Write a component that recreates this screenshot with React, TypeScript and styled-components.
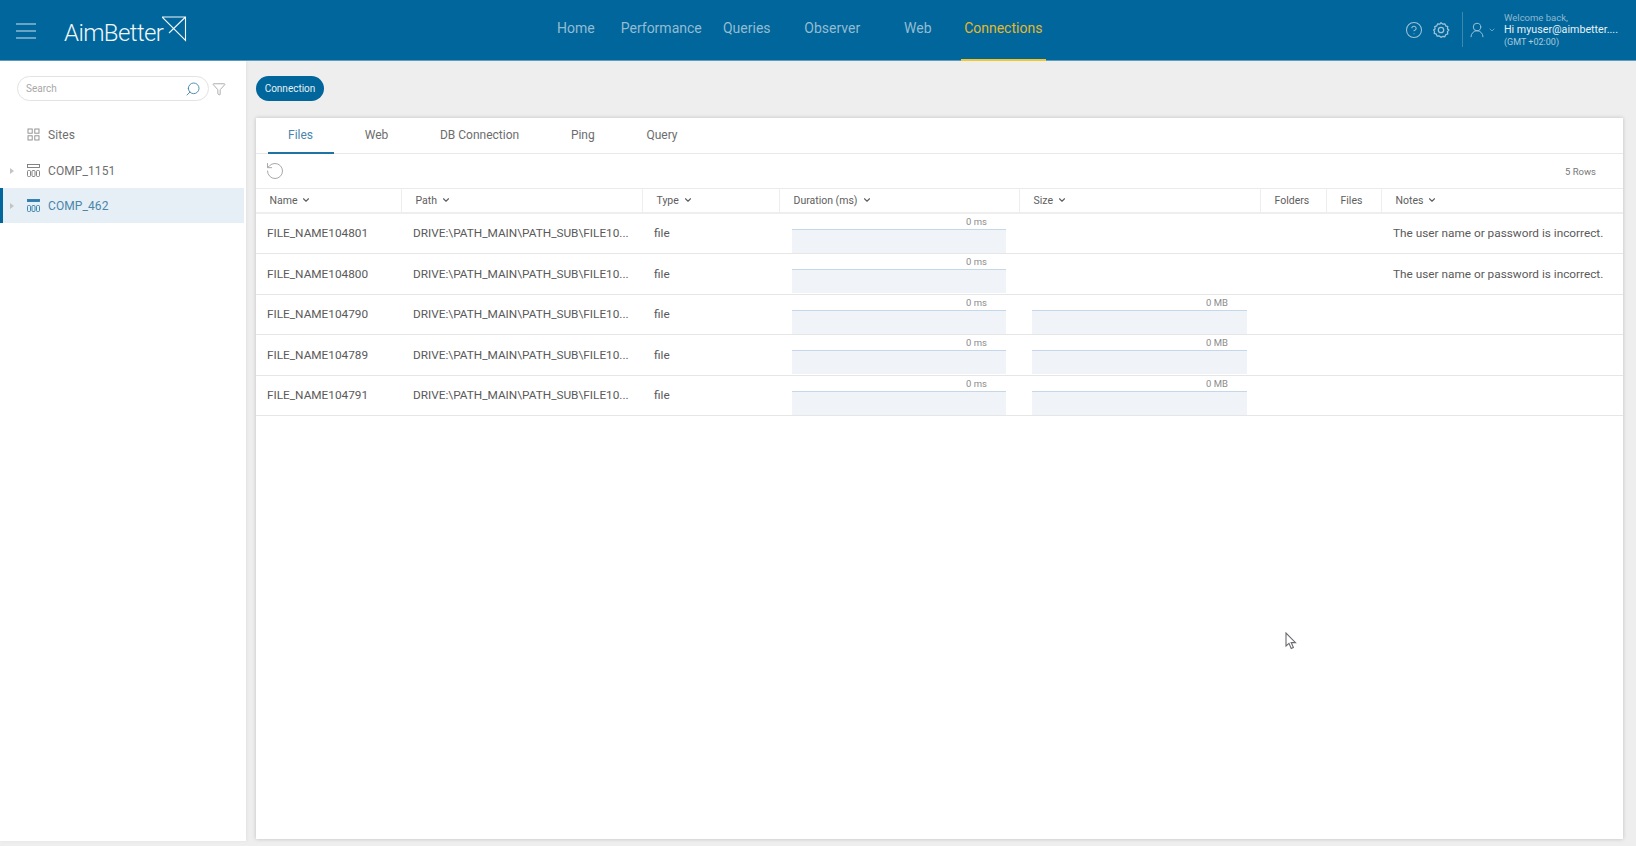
import React from 'react';
import styled, { createGlobalStyle } from 'styled-components';
import { ChevronDown, CircleHelp, Funnel, RotateCcw, Search, UserRound } from 'lucide-react';

const GlobalStyle = createGlobalStyle`
  html, body {
    margin: 0;
    height: 100%;
    overflow: hidden;
    background: #eeeeee;
    font-family: Roboto, "Liberation Sans", sans-serif;
  }
  * { box-sizing: border-box; }
`;

const COLUMNS = '146px 241px 137px 240px 241px 66px 55px 1fr';

const Page = styled.div`
  position: relative;
  width: 1636px;
  height: 846px;
  display: flex;
  flex-direction: column;
  overflow: hidden;
`;

const Header = styled.header`
  height: 61px;
  flex: none;
  display: flex;
  background: #00669b;
  border-bottom: 1px solid #5f9dbd;
`;

const Brand = styled.div`
  width: 533px;
  flex: none;
  display: flex;
  align-items: flex-start;
  padding: 16px 0 0 16px;
`;

const Burger = styled.svg`
  width: 20px;
  height: 17px;
  margin: 7px 28px 0 0;
  flex: none;
`;

const Wordmark = styled.span`
  font-size: 24px;
  font-weight: 300;
  line-height: 28px;
  margin: 3px -1px 0 0;
  letter-spacing: -0.6px;
  color: #f2f7fa;
`;

const Nav = styled.nav`
  display: flex;
  height: 61px;
`;

const NavItem = styled.a<{ $active?: boolean }>`
  width: 85.5px;
  display: flex;
  justify-content: center;
  padding-top: 19px;
  font-size: 14px;
  line-height: 18px;
  font-weight: 400;
  white-space: nowrap;
  color: ${p => (p.$active ? '#e3b92f' : '#93bcd3')};
  border-bottom: 2px solid ${p => (p.$active ? '#f3c62b' : 'transparent')};
`;

const UserBar = styled.div`
  margin-left: auto;
  display: flex;
  align-items: center;
  padding: 12px 0 13px 0;
  width: 231px;
  color: #9cc3d9;
`;

const HeaderIcons = styled.div`
  display: flex;
  align-items: center;
  gap: 9px;
  height: 100%;
  padding-right: 12px;
  border-right: 1px solid #3d88ae;
`;

const UserIcon = styled.div`
  display: flex;
  align-items: center;
  gap: 2px;
  padding: 0 8px 0 5px;
`;

const UserText = styled.div`
  display: flex;
  flex-direction: column;
  min-width: 0;
`;

const Welcome = styled.span`
  font-size: 9.5px;
  line-height: 12px;
  color: #8fb9d1;
`;

const Hi = styled.span`
  font-size: 10.7px;
  line-height: 12px;
  color: #e8f1f6;
  white-space: nowrap;
`;

const Zone = styled.span`
  font-size: 9px;
  line-height: 12px;
  color: #a9cadd;
`;

const Body = styled.div`
  flex: 1;
  display: flex;
  min-height: 0;
`;

const Sidebar = styled.aside`
  width: 246px;
  flex: none;
  height: 780px;
  background: #ffffff;
  padding-top: 15px;
  box-shadow: 1px 0 3px rgba(0, 0, 0, 0.05);
`;

const SearchRow = styled.div`
  display: flex;
  align-items: center;
  padding: 0 0 0 17px;
  margin-bottom: 17px;
`;

const SearchBox = styled.div`
  width: 192px;
  height: 25px;
  display: flex;
  align-items: center;
  justify-content: space-between;
  padding: 0 7px 0 8px;
  border: 1px solid #e3e3e3;
  border-radius: 13px;
  font-size: 10px;
  color: #a8a8a8;
`;

const FilterButton = styled.span`
  display: flex;
  margin-left: 3px;
  color: #8d8d8d;
`;

const TreeRow = styled.div<{ $active?: boolean }>`
  height: 35px;
  width: 244px;
  display: flex;
  align-items: center;
  font-size: 12px;
  letter-spacing: 0.1px;
  padding-left: ${p => (p.$active ? '7px' : '10px')};
  color: ${p => (p.$active ? '#4a86ab' : '#6f6f6f')};
  background: ${p => (p.$active ? '#e6eff5' : 'transparent')};
  border-left: ${p => (p.$active ? '3px solid #00669b' : 'none')};
`;

const RootRow = styled(TreeRow)`
  padding-bottom: 2px;
`;

const Caret = styled.span<{ $hidden?: boolean }>`
  width: 0;
  height: 0;
  flex: none;
  border-left: 4px solid #c4c4c4;
  border-top: 3px solid transparent;
  border-bottom: 3px solid transparent;
  margin-right: 13px;
  visibility: ${p => (p.$hidden ? 'hidden' : 'visible')};
`;

const TreeIcon = styled.svg`
  width: 13px;
  height: 13px;
  flex: none;
  margin-right: 8px;
`;

const Main = styled.main`
  flex: 1;
  min-width: 0;
  display: flex;
  flex-direction: column;
  padding: 15px 13px 7px 10px;
`;

const PrimaryButton = styled.button`
  align-self: flex-start;
  height: 25px;
  width: 68px;
  padding: 0;
  border: none;
  border-radius: 13px;
  background: #00669b;
  color: #e6f0f5;
  font-family: inherit;
  font-size: 10px;
  margin-bottom: 17px;
`;

const Card = styled.section`
  flex: 1;
  min-height: 0;
  background: #ffffff;
  box-shadow: 0 0 4px rgba(0, 0, 0, 0.2);
`;

const Tabs = styled.div`
  height: 36px;
  display: flex;
  gap: 10.7px;
  padding-left: 11.5px;
  border-bottom: 1px solid #e9e9e9;
`;

const Tab = styled.a<{ $active?: boolean }>`
  padding: 10px 20.5px 0;
  font-size: 12px;
  line-height: 15px;
  white-space: nowrap;
  color: ${p => (p.$active ? '#4a86ab' : '#6d6d6d')};
  border-bottom: 2px solid ${p => (p.$active ? '#1d74a3' : 'transparent')};
  height: 36px;
`;

const Toolbar = styled.div`
  height: 34px;
  display: flex;
  align-items: center;
  justify-content: space-between;
  padding: 0 27px 0 9px;
  color: #a9a9a9;
`;

const RowCount = styled.span`
  font-size: 9.5px;
  color: #777777;
`;

const HeadRow = styled.div`
  display: grid;
  grid-template-columns: ${COLUMNS};
  height: 25.5px;
  border-top: 1px solid #ebebeb;
  border-bottom: 2px solid #eeeeee;
`;

const HeadCell = styled.div<{ $last?: boolean }>`
  display: flex;
  align-items: center;
  gap: 4px;
  padding-left: 13.5px;
  font-size: 10.5px;
  color: #5e5e5e;
  border-right: ${p => (p.$last ? 'none' : '1px solid #eeeeee')};
`;

const Row = styled.div`
  display: grid;
  grid-template-columns: ${COLUMNS};
  height: 40.5px;
  border-bottom: 1px solid #e6e6e6;
`;

const TextCell = styled.div`
  display: flex;
  align-items: center;
  min-width: 0;
  padding-left: 11px;
  font-size: 11.8px;
  color: #5a5a5a;
  white-space: nowrap;
`;

const NoteCell = styled(TextCell)`
  grid-column: 8;
`;

const BarCell = styled.div`
  display: flex;
  flex-direction: column;
  padding: 2px 14px 0 12px;
`;

const BarLabel = styled.span`
  font-size: 9.5px;
  line-height: 12px;
  text-align: right;
  padding-right: 19px;
  color: #8c8c8c;
`;

const Bar = styled.div`
  height: 24px;
  margin-top: 1px;
  background: #f0f4f9;
  border-top: 1px solid #c4d8ea;
`;

const Pointer = styled.svg`
  position: absolute;
  left: 1285px;
  top: 632px;
  width: 13px;
  height: 19px;
`;

const HEADS: [string, boolean][] = [
  ['Name', true],
  ['Path', true],
  ['Type', true],
  ['Duration (ms)', true],
  ['Size', true],
  ['Folders', false],
  ['Files', false],
  ['Notes', true],
];

const ROWS = [
  { id: '104801', error: true },
  { id: '104800', error: true },
  { id: '104790', error: false },
  { id: '104789', error: false },
  { id: '104791', error: false },
];

const NAV = ['Home', 'Performance', 'Queries', 'Observer', 'Web', 'Connections'];
const TABS = ['Files', 'Web', 'DB Connection', 'Ping', 'Query'];

const Gear = () => (
  <svg width="18" height="18" viewBox="0 0 24 24" fill="none" stroke="currentColor" strokeWidth="1.7" strokeLinejoin="round">
    <path d="M12 2.2l2.2 1.9 2.9-.4 1.2 2.7 2.7 1.2-.4 2.9 1.9 1.5-1.9 2.2.4 2.9-2.7 1.2-1.2 2.7-2.9-.4L12 21.8l-2.2-1.9-2.9.4-1.2-2.7-2.7-1.2.4-2.9L2.2 12l1.9-1.5-.4-2.9 2.7-1.2 1.2-2.7 2.9.4z" />
    <circle cx="12" cy="12" r="3.6" />
  </svg>
);

const ServerIcon = ({ color, heavy }: { color: string; heavy?: boolean }) => (
  <TreeIcon viewBox="0 0 13 13" fill="none" stroke={color} strokeWidth="0.9">
    <rect x="0.5" y="0.5" width="12" height={heavy ? 2 : 3} fill={heavy ? color : 'none'} />
    <rect x="0.5" y="6.5" width="3" height="6" rx="1" />
    <rect x="5" y="6.5" width="3" height="6" rx="1" />
    <rect x="9.5" y="6.5" width="3" height="6" rx="1" />
  </TreeIcon>
);

const App: React.FC = () => {
  return (
    <Page>
      <GlobalStyle />
      <Header>
        <Brand>
          <Burger viewBox="0 0 20 17" stroke="#cfe2ec" strokeWidth="1.2">
            <path d="M0 1h20M0 8h20M0 15h20" />
          </Burger>
          <Wordmark>AimBetter</Wordmark>
          <svg width="25" height="26" viewBox="0 0 25 26" fill="none" stroke="#f2f7fa" strokeWidth="1.1">
            <path d="M0 1h23.5v23.5L0 1M7 17L23.5 1" />
          </svg>
        </Brand>
        <Nav>
          {NAV.map(item => (
            <NavItem key={item} $active={item === 'Connections'}>{item}</NavItem>
          ))}
        </Nav>
        <UserBar>
          <HeaderIcons>
            <CircleHelp size={18} strokeWidth={1.4} />
            <Gear />
          </HeaderIcons>
          <UserIcon>
            <UserRound size={18} strokeWidth={1.3} />
            <ChevronDown size={8} />
          </UserIcon>
          <UserText>
            <Welcome>Welcome back,</Welcome>
            <Hi>Hi myuser@aimbetter....</Hi>
            <Zone>(GMT +02:00)</Zone>
          </UserText>
        </UserBar>
      </Header>
      <Body>
        <Sidebar>
          <SearchRow>
            <SearchBox>
              Search
              <Search size={16} color="#4a86ab" strokeWidth={1.4} style={{ transform: 'scaleX(-1)' }} />
            </SearchBox>
            <FilterButton>
              <Funnel size={14} strokeWidth={1.2} />
            </FilterButton>
          </SearchRow>
          <RootRow>
            <Caret $hidden />
            <TreeIcon viewBox="0 0 13 13" fill="none" stroke="#8a8a8a" strokeWidth="0.9">
              <rect x="1" y="1" width="4.2" height="4.2" />
              <rect x="7.8" y="1" width="4.2" height="4.2" />
              <rect x="1" y="7.8" width="4.2" height="4.2" />
              <rect x="7.8" y="7.8" width="4.2" height="4.2" />
            </TreeIcon>
            Sites
          </RootRow>
          <TreeRow>
            <Caret />
            <ServerIcon color="#777" />
            COMP_1151
          </TreeRow>
          <TreeRow $active>
            <Caret />
            <ServerIcon color="#2f7dab" heavy />
            COMP_462
          </TreeRow>
        </Sidebar>
        <Main>
          <PrimaryButton>Connection</PrimaryButton>
          <Card>
            <Tabs>
              {TABS.map(tab => (
                <Tab key={tab} $active={tab === 'Files'}>{tab}</Tab>
              ))}
            </Tabs>
            <Toolbar>
              <RotateCcw size={20} strokeWidth={1.2} />
              <RowCount>5 Rows</RowCount>
            </Toolbar>
            <HeadRow>
              {HEADS.map(([label, sortable], i) => (
                <HeadCell key={label} $last={i === HEADS.length - 1}>
                  {label}
                  {sortable && <ChevronDown size={10} strokeWidth={2.6} />}
                </HeadCell>
              ))}
            </HeadRow>
            {ROWS.map(row => (
              <Row key={row.id}>
                <TextCell>FILE_NAME{row.id}</TextCell>
                <TextCell>DRIVE:\PATH_MAIN\PATH_SUB\FILE10...</TextCell>
                <TextCell>file</TextCell>
                <BarCell>
                  <BarLabel>0 ms</BarLabel>
                  <Bar />
                </BarCell>
                {!row.error && (
                  <BarCell>
                    <BarLabel>0 MB</BarLabel>
                    <Bar />
                  </BarCell>
                )}
                {row.error && <NoteCell>The user name or password is incorrect.</NoteCell>}
              </Row>
            ))}
          </Card>
        </Main>
      </Body>
      <Pointer viewBox="0 0 13 19" fill="#fff" stroke="#6b6b70" strokeWidth="1.1">
        <path d="M1 1v13l3-2.6 2.2 5 2.2-1-2.2-4.8H10.5z" />
      </Pointer>
    </Page>
  );
};

export default App;
